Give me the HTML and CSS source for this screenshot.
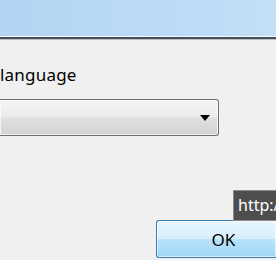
FILE: index.html
```html
<!DOCTYPE html>
<html lang="en">
<head>
    <meta charset="UTF-8">
    <meta name="viewport" content="width=device-width, initial-scale=1.0">
    <title>Language</title>
    <link rel="stylesheet" href="styles.css">
</head>
<body>

    <div class="titlebar"></div>
    <div class="frame-edge"></div>

    <div class="dialog">
        <div class="label">language</div>

        <div class="combo">
            <span class="combo-arrow"></span>
        </div>

        <div class="actions">
            <button class="ok-button">OK</button>
        </div>
    </div>

    <!-- tooltip over the button -->
    <div class="tooltip">http://</div>

</body>
</html>
```

FILE: styles.css
```css
* {
    margin: 0;
    padding: 0;
    box-sizing: border-box;
}

body {
    width: 276px;
    height: 260px;
    overflow: hidden;
    position: relative;
    background-color: #f0f0f0;
    color: #000;
    font-family: 'Noto Sans', 'Open Sans', sans-serif;
}

.titlebar {
    height: 37px;
    background: linear-gradient(90deg, #b3d4f2, #b9d9f5 40%, #bedcf7 75%, #c4e0f8);
    border-bottom: 1px solid #f6fafd;
}

.frame-edge {
    height: 3px;
    background-color: #45505b;
    border-bottom: 1px solid #b9bfc5;
}

.dialog {
    padding-top: 24px;
}

.label {
    height: 21px;
    line-height: 21px;
    font-size: 17px;
    letter-spacing: 0.2px;
}

.combo {
    margin-top: 14px;
    width: 219px;
    height: 37px;
    border: 1px solid #707070;
    border-left: none;
    border-radius: 0 3px 3px 0;
    background: linear-gradient(#f4f4f4, #ececec 48%, #e0e0e0 52%, #d3d3d3);
    box-shadow: inset 0 0 0 1px rgba(255, 255, 255, 0.7);
    display: flex;
    align-items: center;
    justify-content: flex-end;
    padding-right: 8px;
}

.combo-arrow {
    width: 0;
    height: 0;
    border-left: 5px solid transparent;
    border-right: 5px solid transparent;
    border-top: 6px solid #000;
}

.actions {
    margin-top: 84px;
    padding-left: 156px;
}

.ok-button {
    width: 120px;
    height: 38px;
    padding-left: 14px;
    border: 1px solid #3c7fb1;
    border-right: none;
    border-radius: 3px 0 0 3px;
    background: linear-gradient(#e8f5fd, #d6effc 50%, #b9e3fb 50%, #a2d6f4);
    box-shadow: inset 0 0 0 1px rgba(255, 255, 255, 0.6);
    font-family: 'Noto Sans', 'Open Sans', sans-serif;
    font-size: 17px;
    color: #000;
}

.tooltip {
    position: absolute;
    left: 233px;
    top: 190px;
    width: 43px;
    height: 31px;
    overflow: hidden;
    background-color: #4e4e4e;
    border: 1px solid #8a8a8a;
    border-right: none;
    color: #fff;
    font-size: 16px;
    line-height: 28px;
    padding-left: 4px;
    white-space: nowrap;
}
```
